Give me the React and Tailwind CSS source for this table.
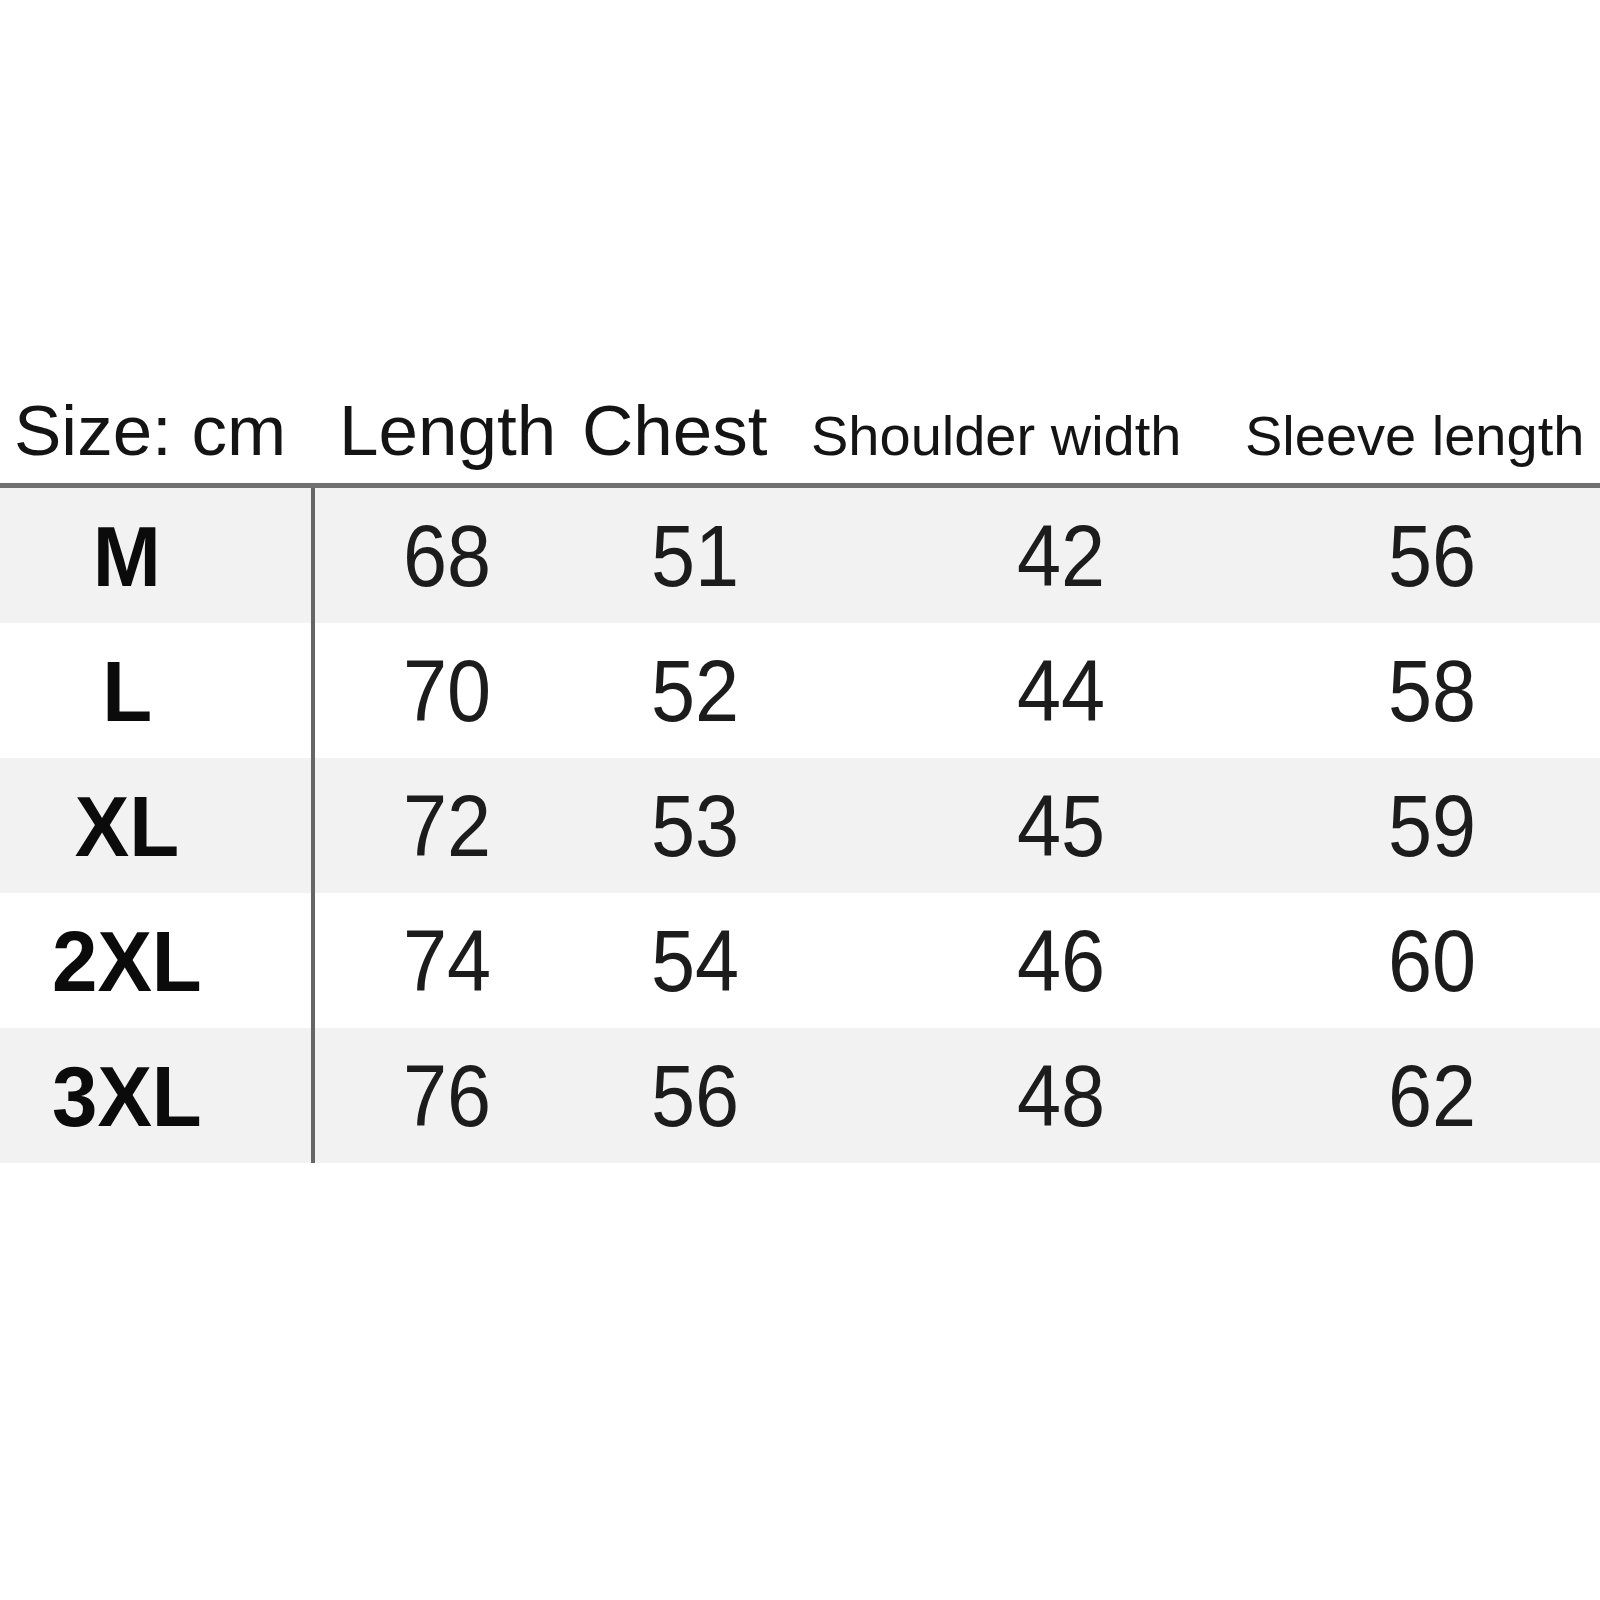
// Size chart: header labels, a rule, then five striped rows
const rows = [
  { size: "M", values: ["68", "51", "42", "56"] },
  { size: "L", values: ["70", "52", "44", "58"] },
  { size: "XL", values: ["72", "53", "45", "59"] },
  { size: "2XL", values: ["74", "54", "46", "60"] },
  { size: "3XL", values: ["76", "56", "48", "62"] },
];

const SizeRow = ({ row, shaded }) => {
  return (
    <div
      className={
        "grid grid-cols-[311px_4px_264px_232px_500px_242px_1fr] h-[135px] items-center " +
        (shaded ? "bg-[#f2f2f2]" : "bg-white")
      }
    >
      <div className="w-[254px] text-center text-[86px] leading-none font-bold text-[#0b0b0b]">
        <span className="inline-block scale-x-[0.95]">{row.size}</span>
      </div>
      <div className="h-full bg-[#666666]"></div>
      {row.values.map((v, i) => (
        <div key={i} className="text-center text-[88px] leading-none text-[#1c1c1c]">
          <span className="inline-block scale-x-[0.9]">{v}</span>
        </div>
      ))}
      <div></div>
    </div>
  );
};

export default function App() {
  return (
    <div className="w-[1600px] h-[1600px] bg-white pt-[395px] font-['Liberation_Sans',Arial,sans-serif]">
      {/* header labels */}
      <div className="flex items-baseline text-[#141414] leading-none">
        <div className="w-[339px] pl-[14px] text-[71px]">Size: cm</div>
        <div className="w-[243px] text-[71px]">Length</div>
        <div className="w-[229px] text-[71px]">Chest</div>
        <div className="w-[434px] text-[56px]">Shoulder width</div>
        <div className="text-[56px]">Sleeve length</div>
      </div>

      <div className="mt-[17px] h-[5px] bg-[#707070]"></div>

      <div className="flex flex-col">
        {rows.map((row, i) => (
          <SizeRow key={row.size} row={row} shaded={i % 2 === 0} />
        ))}
      </div>
    </div>
  );
}
